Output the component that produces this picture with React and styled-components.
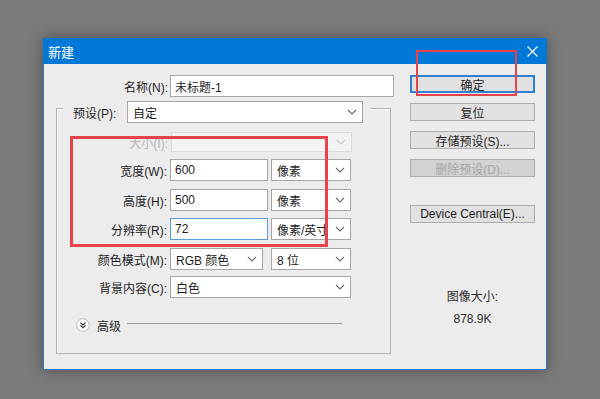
import React from "react";
import styled, { createGlobalStyle } from "styled-components";

const GlobalStyle = createGlobalStyle`
  html, body {
    margin: 0;
    padding: 0;
    background: #7b7b7b;
  }
  * {
    box-sizing: border-box;
  }
`;

const Page = styled.div`
  position: relative;
  width: 600px;
  height: 399px;
  overflow: hidden;
  padding: 38px 0 0 43px;
  background: #7b7b7b;
  font-family: "Liberation Sans", "Noto Sans CJK SC", sans-serif;
  font-size: 12px;
  color: #1e1e1e;
`;

const Window = styled.div`
  width: 504px;
  height: 332px;
  border: 1px solid #2a77c9;
  border-top: none;
  background: #ececec;
  box-shadow: 0 0 14px rgba(0, 0, 0, 0.35);
  display: flex;
  flex-direction: column;
`;

const TitleBar = styled.div`
  height: 26px;
  margin: 0 -1px;
  background: #0078d7;
  color: #fff;
  display: flex;
  align-items: center;
  justify-content: space-between;
  padding: 0 9px 0 5px;
  font-size: 13px;
`;

const Body = styled.div`
  flex: 1;
  display: flex;
  padding-top: 11px;
`;

const LeftCol = styled.div`
  width: 351px;
  display: flex;
  flex-direction: column;
`;

const RightCol = styled.div`
  width: 125px;
  margin-left: 15px;
  display: flex;
  flex-direction: column;
  align-items: stretch;
`;

const Row = styled.div`
  display: flex;
  align-items: center;
  height: ${(p) => p.$h || 22}px;
  margin-top: ${(p) => p.$mt || 0}px;
`;

const Label = styled.label`
  width: ${(p) => p.$w}px;
  text-align: ${(p) => (p.$left ? "left" : "right")};
  white-space: nowrap;
  margin-right: ${(p) => (p.$gap != null ? p.$gap : 3)}px;
  color: ${(p) => (p.$disabled ? "#b4b4b4" : "#1e1e1e")};
`;

const Input = styled.div`
  width: ${(p) => p.$w}px;
  height: 100%;
  background: #fff;
  border: 1px solid ${(p) => (p.$focus ? "#5a9ee0" : "#a6a6a6")};
  display: flex;
  align-items: center;
  padding-left: 4px;
`;

const Select = styled.div`
  width: ${(p) => p.$w}px;
  height: 100%;
  margin-left: ${(p) => p.$ml || 0}px;
  background: ${(p) => (p.$disabled ? "#f3f3f3" : "#fff")};
  border: 1px solid ${(p) => (p.$disabled ? "#dadada" : "#a6a6a6")};
  display: flex;
  align-items: center;
  justify-content: space-between;
  padding: 0 5px 0 5px;
  white-space: nowrap;
  overflow: hidden;
`;

const Group = styled.div`
  margin: 11px 0 0 12px;
  width: 335px;
  height: 246px;
  border: 1px solid #b4b4b4;
  box-shadow: inset 1px 1px 0 #fafafa;
  display: flex;
  flex-direction: column;
`;

const GroupHeader = styled.div`
  display: flex;
  align-items: center;
  height: 22px;
  margin: -8px 0 0 6px;
  padding: 0 7px 0 10px;
  width: 307px;
  background: #ececec;
`;

const Advanced = styled.div`
  display: flex;
  align-items: center;
  margin: 19px 0 0 19px;
  height: 16px;
`;

const AdvancedText = styled.span`
  margin: 0 6px 0 7px;
`;

const Rule = styled.div`
  width: 215px;
  height: 1px;
  background: #9a9a9a;
  margin-top: -3px;
`;

const Button = styled.div`
  height: 18px;
  margin-top: ${(p) => p.$mt || 0}px;
  display: flex;
  align-items: center;
  justify-content: center;
  background: ${(p) => (p.$disabled ? "#d2d2d2" : "#e1e1e1")};
  border: ${(p) => (p.$primary ? "2px solid #2f80d1" : "1px solid #adadad")};
  color: ${(p) => (p.$disabled ? "#a6a6a6" : "#1e1e1e")};
  white-space: nowrap;
`;

const SizeInfo = styled.div`
  margin-top: 64px;
  display: flex;
  flex-direction: column;
  align-items: center;
  gap: 8px;
  color: #2b2b2b;
`;

const Annotation = styled.div`
  position: absolute;
  border: ${(p) => p.$bw}px solid #e8424a;
  pointer-events: none;
`;

function Chevron({ light }) {
  return (
    <svg width="10" height="6" viewBox="0 0 10 6">
      <path
        d="M1 1 L5 5 L9 1"
        fill="none"
        stroke={light ? "#c8c8c8" : "#6a6a6a"}
        strokeWidth="1.1"
      />
    </svg>
  );
}

function Close() {
  return (
    <svg width="11" height="11" viewBox="0 0 11 11">
      <path d="M0.5 0.5 L10.5 10.5 M10.5 0.5 L0.5 10.5" stroke="#fff" strokeWidth="1.2" />
    </svg>
  );
}

function ExpandIcon() {
  return (
    <svg width="14" height="14" viewBox="0 0 14 14">
      <circle cx="7" cy="7" r="6.3" fill="#fbfbfb" stroke="#b9b9b9" strokeWidth="0.9" />
      <path
        d="M4.4 4.6 L7 7 L9.6 4.6 M4.4 7.4 L7 9.8 L9.6 7.4"
        fill="none"
        stroke="#333"
        strokeWidth="1.2"
      />
    </svg>
  );
}

function Dropdown({ w, ml, value, disabled }) {
  return (
    <Select $w={w} $ml={ml} $disabled={disabled}>
      <span>{value}</span>
      <Chevron light={disabled} />
    </Select>
  );
}

export default function App() {
  return (
    <Page>
      <GlobalStyle />
      <Window>
        <TitleBar>
          <span>新建</span>
          <Close />
        </TitleBar>
        <Body>
          <LeftCol>
            <Row>
              <Label $w={124} $gap={2}>名称(N):</Label>
              <Input $w={224}>未标题-1</Input>
            </Row>
            <Group>
              <GroupHeader>
                <Label $w={52} $gap={2} $left>
                  预设(P):
                </Label>
                <Dropdown w={236} value="自定" />
              </GroupHeader>
              <Row $h={20} $mt={9}>
                <Label $w={111} $disabled>大小(I):</Label>
                <Dropdown w={181} value="" disabled />
              </Row>
              <Row $mt={7}>
                <Label $w={110}>宽度(W):</Label>
                <Input $w={98}>600</Input>
                <Dropdown w={80} ml={3} value="像素" />
              </Row>
              <Row $mt={8}>
                <Label $w={110}>高度(H):</Label>
                <Input $w={98}>500</Input>
                <Dropdown w={80} ml={3} value="像素" />
              </Row>
              <Row $mt={7}>
                <Label $w={110}>分辨率(R):</Label>
                <Input $w={98} $focus>72</Input>
                <Dropdown w={80} ml={3} value="像素/英寸" />
              </Row>
              <Row $mt={8}>
                <Label $w={110}>颜色模式(M):</Label>
                <Dropdown w={93} value="RGB 颜色" />
                <Dropdown w={80} ml={8} value="8 位" />
              </Row>
              <Row $mt={6}>
                <Label $w={110}>背景内容(C):</Label>
                <Dropdown w={181} value="白色" />
              </Row>
              <Advanced>
                <ExpandIcon />
                <AdvancedText>高级</AdvancedText>
                <Rule />
              </Advanced>
            </Group>
          </LeftCol>
          <RightCol>
            <Button $primary>确定</Button>
            <Button $mt={10}>复位</Button>
            <Button $mt={10}>存储预设(S)...</Button>
            <Button $mt={10} $disabled>
              删除预设(D)...
            </Button>
            <Button $mt={28}>Device Central(E)...</Button>
            <SizeInfo>
              <span>图像大小:</span>
              <span>878.9K</span>
            </SizeInfo>
          </RightCol>
        </Body>
      </Window>
      <Annotation $bw={2} style={{ left: 416, top: 50, width: 101, height: 46 }} />
      <Annotation $bw={3} style={{ left: 70, top: 136, width: 258, height: 111 }} />
    </Page>
  );
}
